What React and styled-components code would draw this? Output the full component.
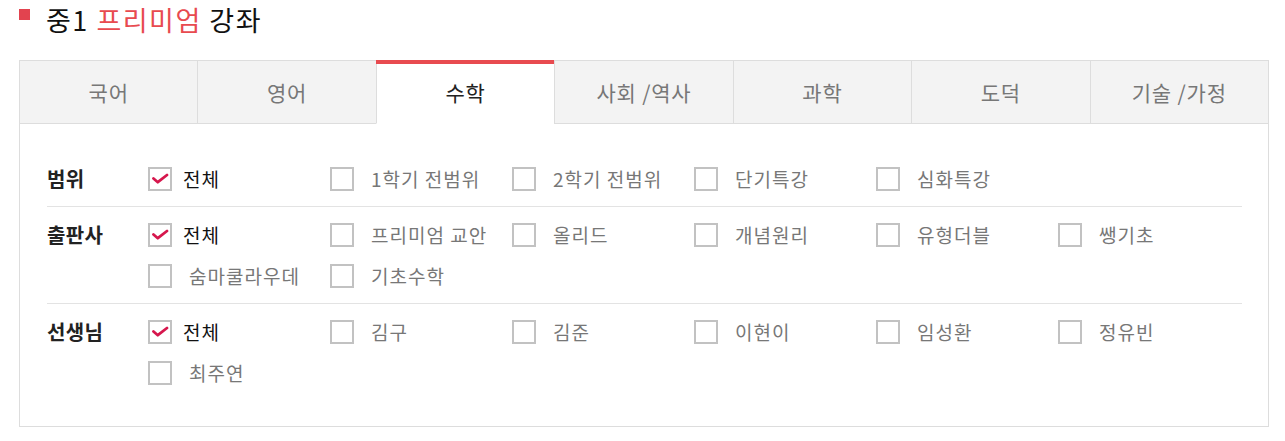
import React, {useState} from 'react';
import styled, {createGlobalStyle} from 'styled-components';

const GlobalStyle = createGlobalStyle`
    body {
        margin: 0;
        background: #ffffff;
        font-family: "Noto Sans CJK KR", "Noto Sans", sans-serif;
    }
`

const Page = styled.div`
    padding: 0 16px 0 19px;
`

const Title = styled.h2`
    display: flex;
    align-items: flex-start;
    margin: 0 0 20px;
    height: 40px;
    font-size: 27px;
    font-weight: 400;
    line-height: 40px;
    color: #111111;
    letter-spacing: 1.5px;
`

const Bullet = styled.span`
    width: 11px;
    height: 11px;
    margin: 9px 16px 0 0;
    background: #e2434f;
    flex: none;
`

const Accent = styled.span`
    color: #e84a4f;
`

const Panel = styled.div`
    width: 1250px;
    box-sizing: border-box;
    border: 1px solid #dddddd;
`

const TabBar = styled.div`
    display: flex;
`

const Tab = styled.button`
    position: relative;
    flex: 1;
    height: 63px;
    padding: 0;
    border: 0;
    border-left: ${props => props.first ? '0' : '1px solid #dddddd'};
    border-bottom: 1px solid ${props => props.active ? '#ffffff' : '#dddddd'};
    background: ${props => props.active ? '#ffffff' : '#f3f3f3'};
    color: ${props => props.active ? '#222222' : '#777777'};
    font-family: inherit;
    font-size: 21px;
    letter-spacing: 0.8px;
    line-height: 62px;
    cursor: pointer;

    &::before {
        content: '';
        display: ${props => props.active ? 'block' : 'none'};
        position: absolute;
        top: -1px;
        left: -1px;
        right: 0;
        height: 4px;
        background: #e84b50;
    }
`

const Body = styled.div`
    padding: 26px 26px 26px 27px;
`

const Row = styled.div`
    display: grid;
    grid-template-columns: 101px 1fr;
    padding: ${props => props.first ? '8px' : '7px'} 0 7px;
    border-bottom: ${props => props.last ? '0' : '1px solid #e3e3e3'};
`

const Label = styled.div`
    font-size: 20px;
    font-weight: 700;
    line-height: 41px;
    letter-spacing: 0.3px;
    color: #222222;
`

const Options = styled.div`
    display: grid;
    grid-template-columns: repeat(6, 182px);
    grid-auto-rows: 41px;
`

const Option = styled.label`
    display: flex;
    align-items: center;
    cursor: pointer;
`

const Box = styled.span`
    display: flex;
    align-items: center;
    justify-content: center;
    width: 24px;
    height: 24px;
    box-sizing: border-box;
    border: 2px solid #c2c2c2;
    background: #ffffff;
    flex: none;
`

const Text = styled.span`
    margin-left: ${props => props.checked ? '11px' : '17px'};
    font-size: 19px;
    letter-spacing: 1px;
    color: ${props => props.checked ? '#111111' : '#777777'};
    white-space: nowrap;
`

const Check = () => (
    <svg width="17" height="12" viewBox="0 0 17 12">
        <path d="M1.5 5.5 L5.8 9.2 L15 2" fill="none" stroke="#d6174d" strokeWidth="2.8" strokeLinecap="round" strokeLinejoin="round"/>
    </svg>
)

const tabs = ['국어', '영어', '수학', '사회 /역사', '과학', '도덕', '기술 /가정'];

const filters = [
    {label: '범위', items: ['전체', '1학기 전범위', '2학기 전범위', '단기특강', '심화특강']},
    {label: '출판사', items: ['전체', '프리미엄 교안', '올리드', '개념원리', '유형더블', '쌩기초', '숨마쿨라우데', '기초수학']},
    {label: '선생님', items: ['전체', '김구', '김준', '이현이', '임성환', '정유빈', '최주연']}
];

export default function App() {
    const [active, setActive] = useState(2);

    return (
        <Page>
            <GlobalStyle/>
            <Title><Bullet/>중1&nbsp;<Accent>프리미엄</Accent>&nbsp;강좌</Title>
            <Panel>
                <TabBar>
                    {tabs.map((t, i) =>
                        <Tab key={t} first={i === 0} active={i === active} onClick={() => setActive(i)}>{t}</Tab>
                    )}
                </TabBar>
                <Body>
                    {filters.map((f, r) =>
                        <Row key={f.label} first={r === 0} last={r === filters.length - 1}>
                            <Label>{f.label}</Label>
                            <Options>
                                {f.items.map((item, i) =>
                                    <Option key={item}>
                                        <Box>{i === 0 ? <Check/> : null}</Box>
                                        <Text checked={i === 0}>{item}</Text>
                                    </Option>
                                )}
                            </Options>
                        </Row>
                    )}
                </Body>
            </Panel>
        </Page>
    );
}
